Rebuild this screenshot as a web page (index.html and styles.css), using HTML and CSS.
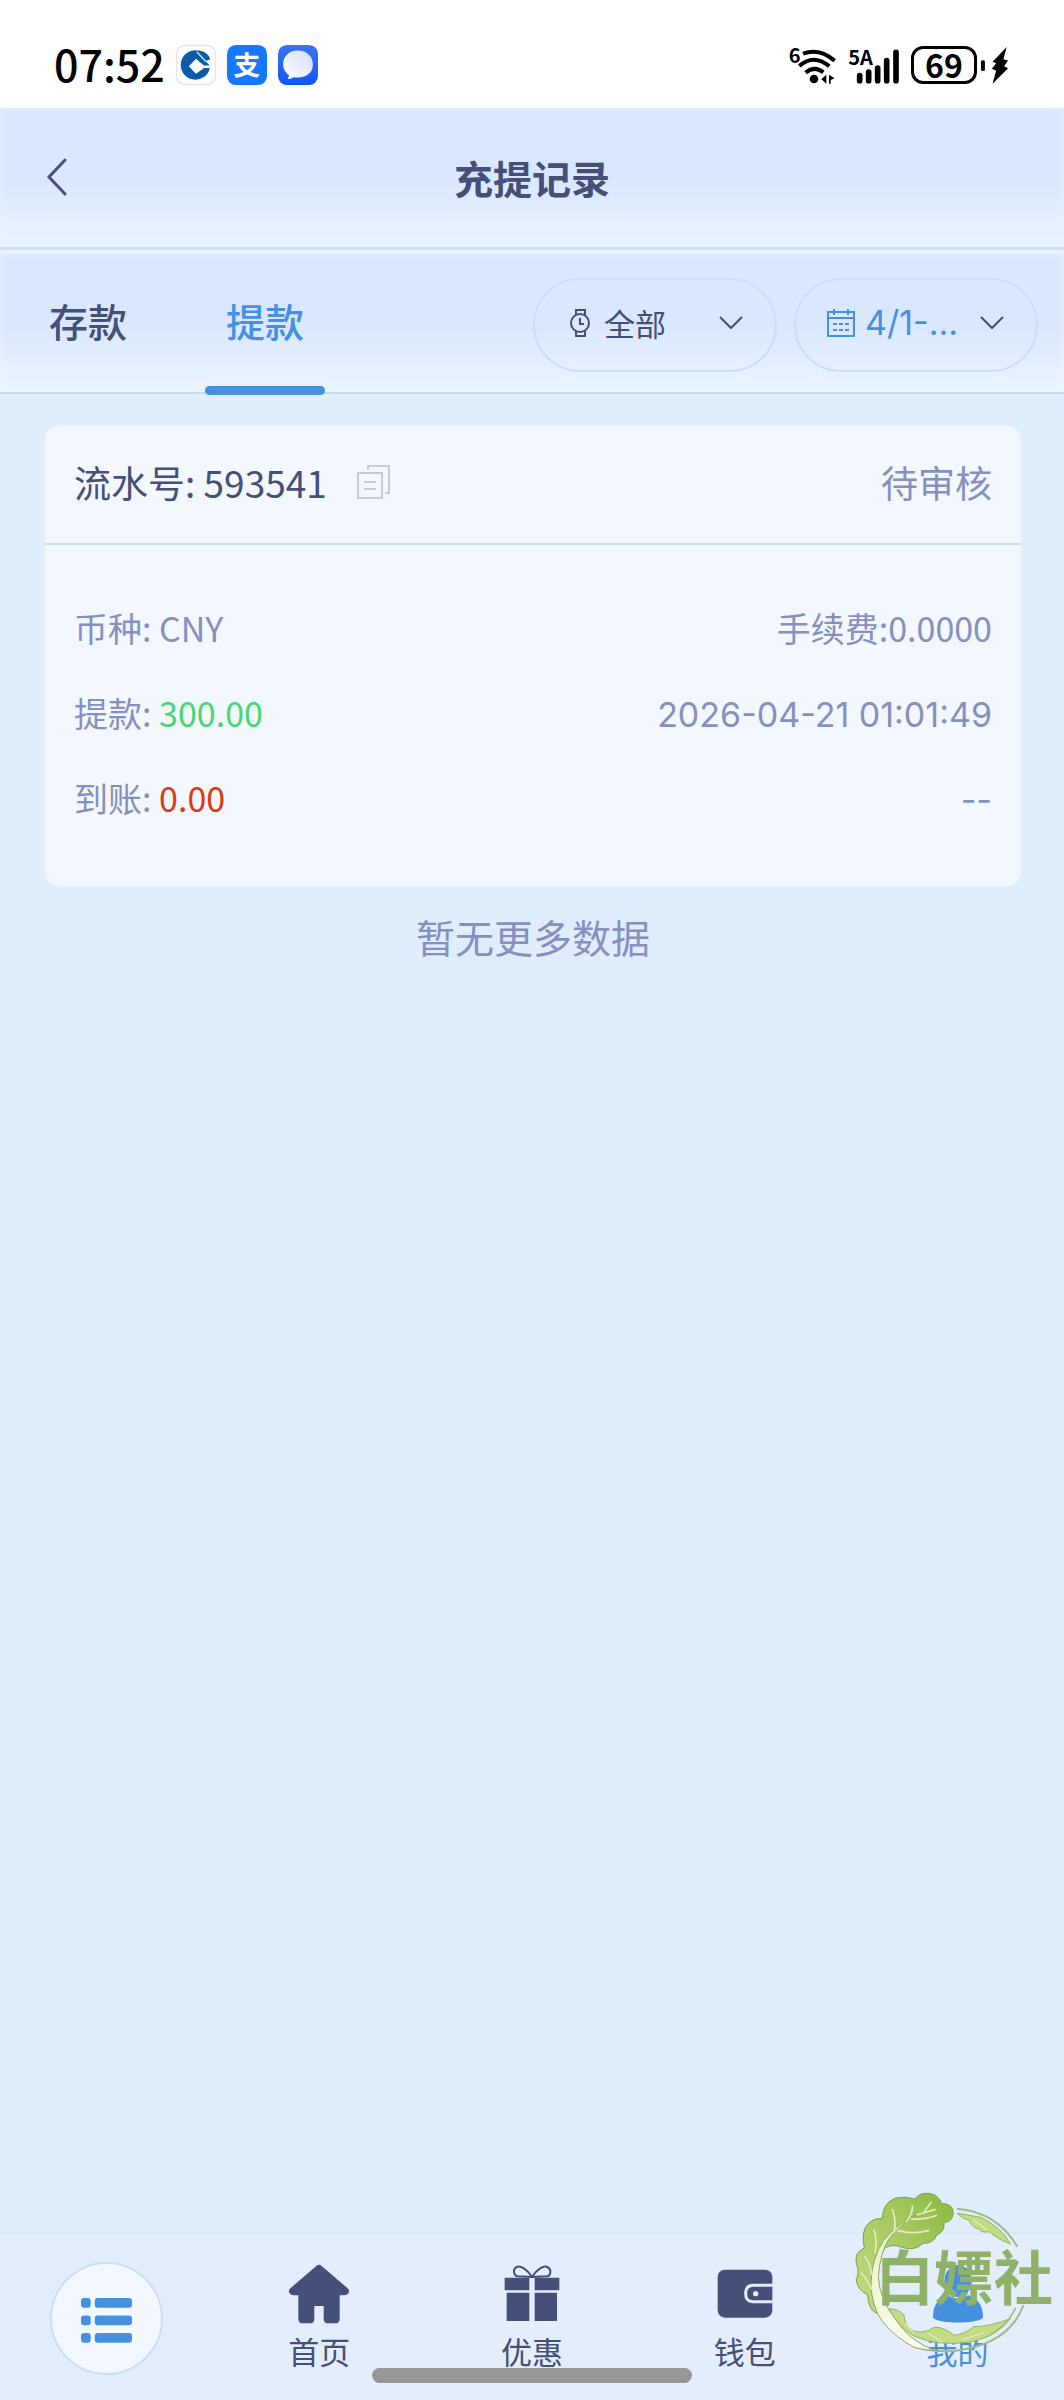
FILE: index.html
```html
<!DOCTYPE html>
<html lang="zh-CN">
<head>
    <meta charset="UTF-8">
    <meta name="viewport" content="width=device-width, initial-scale=1.0">
    <title>充提记录</title>
    <link rel="stylesheet" href="styles.css">
</head>
<body>

<div class="status-bar">
    <div class="status-left">
        <span class="clock">07:52</span>
        <svg class="app-icon" viewBox="0 0 117 117">
            <rect x="1.5" y="1.5" width="114" height="114" rx="24" fill="#fff" stroke="#e6e6e6" stroke-width="4"/>
            <path d="M68 17A43 43 0 1 0 99 67H82L60 83 38 62 58 41 82 60H99L63 24Z" fill="#0a5ca8"/>
            <path d="M66 16Q84 17 96 32L100 42 88 47 61 20Z" fill="#0a5ca8"/>
            <path d="M61 20L87 48" stroke="#b9dcf5" stroke-width="4"/>
            <path d="M60 41L79 62 58 84 38 62Z" fill="#fff"/>
        </svg>
        <svg class="app-icon" viewBox="0 0 117 117">
            <rect width="117" height="117" rx="26" fill="#1677ff"/>
            <text class="pay-mark" x="58" y="88" text-anchor="middle">支</text>
        </svg>
        <svg class="app-icon" viewBox="0 0 117 117">
            <defs>
                <linearGradient id="chat-bg" x1="0" y1="0" x2="0" y2="1">
                    <stop offset="0" stop-color="#3d74f3"/>
                    <stop offset="1" stop-color="#1155f6"/>
                </linearGradient>
                <linearGradient id="chat-bubble" x1="1" y1="0" x2="0" y2="1">
                    <stop offset="0" stop-color="#d3defa"/>
                    <stop offset="1" stop-color="#fff"/>
                </linearGradient>
            </defs>
            <rect width="117" height="117" rx="26" fill="url(#chat-bg)"/>
            <path d="M58 16C84 16 102 33 102 57S84 95 58 95C54 95 50 95 46 94Q37 100 28 99 33 94 32 88C22 81 15 70 15 57 15 33 32 16 58 16Z" fill="url(#chat-bubble)"/>
        </svg>
    </div>
    <div class="status-right">
        <svg class="wifi" viewBox="750 130 150 126">
            <text class="net-label" x="755" y="187">6</text>
            <g fill="none" stroke="#000" stroke-width="12">
                <path d="M798 159Q846 141 893 180"/>
                <path d="M787 196Q830 158 877 197"/>
                <path d="M806 216Q832 194 859 215"/>
            </g>
            <circle cx="831" cy="235" r="13"/>
            <path d="M853 236L868 222V249ZM893 233L876 222V249H881V238Z"/>
        </svg>
        <svg class="signal" viewBox="925 130 156 126">
            <text class="net-label" x="926" y="194">5A</text>
            <g stroke="#000" stroke-width="17" stroke-linecap="round">
                <path d="M960 225V240M987 214V240M1014 202V240M1041 180V240M1069 155V240"/>
            </g>
        </svg>
        <span class="battery">69</span>
        <svg class="bolt" viewBox="1318 138 86 118">
            <rect x="1320" y="181" width="12" height="33" rx="5"/>
            <path d="M1398 141L1355 186 1366 190 1353 207 1366 213 1355 252 1402 205 1390 199 1402 182 1388 178Z"/>
        </svg>
    </div>
</div>

<header class="header">
    <button class="back" aria-label="返回">
        <svg viewBox="0 0 22 38"><path d="M19 2L3 19 19 36" fill="none" stroke="#454f78" stroke-width="3" stroke-linecap="round"/></svg>
    </button>
    <h1>充提记录</h1>
</header>

<div class="toolbar">
    <div class="tabs" role="tablist">
        <button class="tab" role="tab" aria-selected="false">存款</button>
        <button class="tab active" role="tab" aria-selected="true">提款</button>
    </div>
    <div class="filters">
        <div class="filter">
            <svg class="filter-icon" viewBox="0 0 28 28" fill="none" stroke="#454f78" stroke-width="2">
                <circle cx="14" cy="14" r="9"/>
                <path d="M10 6V1H19V6M10 22V27H19V22M14 9V15H18"/>
            </svg>
            <select class="filter-value" aria-label="类型">
                <option>全部</option>
            </select>
            <svg class="chevron" viewBox="0 0 24 14"><path d="M1 1L12 12 23 1" fill="none" stroke="#454f78" stroke-width="2"/></svg>
        </div>
        <button class="filter date">
            <svg class="filter-icon" viewBox="0 0 28 28" fill="none" stroke="#4690e0" stroke-width="2">
                <path d="M1 3H27V27H1ZM1 9H27M7 0V6M21 0V6"/>
                <path d="M6 15H22M6 21H22" stroke-dasharray="4 2"/>
            </svg>
            <span class="filter-value">4/1-...</span>
            <svg class="chevron" viewBox="0 0 24 14"><path d="M1 1L12 12 23 1" fill="none" stroke="#454f78" stroke-width="2"/></svg>
        </button>
    </div>
</div>

<main class="content">
    <div class="card">
        <div class="card-head">
            <span>流水号: 593541</span>
            <button class="copy" aria-label="复制">
                <svg viewBox="0 0 34 34" fill="none" stroke="#c5cae2" stroke-width="2">
                    <path d="M11 5V1H32V28H28M1 8H25V33H1ZM7 17H19M7 24H19"/>
                </svg>
            </button>
            <span class="state">待审核</span>
        </div>
        <div class="card-body">
            <div class="row"><span>币种: CNY</span><span>手续费:0.0000</span></div>
            <div class="row"><span>提款: <b class="green">300.00</b></span><span class="time">2026-04-21 01:01:49</span></div>
            <div class="row"><span>到账: <b class="red">0.00</b></span><span class="time">--</span></div>
        </div>
    </div>
    <p class="no-more">暂无更多数据</p>
</main>

<nav class="bottom-nav">
    <button class="menu" aria-label="菜单">
        <svg viewBox="0 0 152 134" fill="#4690e0">
            <rect width="29" height="29" rx="9"/><rect x="41" width="111" height="29" rx="9"/>
            <rect y="52" width="29" height="29" rx="9"/><rect x="41" y="52" width="111" height="29" rx="9"/>
            <rect y="104" width="29" height="29" rx="9"/><rect x="41" y="104" width="111" height="29" rx="9"/>
        </svg>
    </button>
    <a class="nav-item" href="#">
        <svg viewBox="0 0 180 180" fill="#454f78">
            <path d="M82 6Q90-1 98 6L175 72Q184 80 178 88 175 94 165 94H152V164Q152 178 138 178H118Q104 178 104 164V126H76V164Q76 178 62 178H42Q28 178 28 164V94H15Q5 94 2 88-4 80 5 72Z"/>
        </svg>
        首页
    </a>
    <a class="nav-item" href="#">
        <svg viewBox="0 0 180 180" fill="#454f78">
            <path d="M8 41H82V79H8ZM98 41H172V79H98ZM14 86H82V171H14ZM98 86H165V171H98Z"/>
            <path d="M90 39C76 16 55 2 42 10 31 18 36 36 48 37ZM90 39C104 16 125 2 138 10 150 18 146 36 134 37Z" fill="none" stroke="#454f78" stroke-width="6"/>
        </svg>
        优惠
    </a>
    <a class="nav-item" href="#">
        <svg viewBox="0 0 180 180">
            <rect x="8" y="17" width="164" height="144" rx="22" fill="#454f78"/>
            <path d="M173 64H115Q92 64 92 89T115 113H173" fill="none" stroke="#e3edfc" stroke-width="9"/>
            <circle cx="122" cy="89" r="8" fill="#e3edfc"/>
        </svg>
        钱包
    </a>
    <a class="nav-item current" href="#">
        <svg viewBox="0 0 180 180" fill="#4690e0">
            <ellipse cx="90" cy="51" rx="41" ry="48"/>
            <path d="M58 94Q90 115 122 94C151 104 165 127 165 158 165 181 15 181 15 158 15 127 29 104 58 94Z"/>
        </svg>
        我的
    </a>
    <div class="home-bar"></div>

    <!-- cabbage badge in the corner -->
    <svg class="badge" viewBox="0 0 690 660">
        <defs>
            <linearGradient id="leaf" x1="0" y1="1" x2="1" y2="0">
                <stop offset="0" stop-color="#c6dc86"/>
                <stop offset="1" stop-color="#8cba42"/>
            </linearGradient>
            <linearGradient id="stem" x1="0" y1="0" x2="0" y2="1">
                <stop offset="0" stop-color="#e6f0bd"/>
                <stop offset="1" stop-color="#fafcee"/>
            </linearGradient>
        </defs>
        <path d="M369 86Q490 96 550 200M568 376Q530 480 400 506 320 524 240 500" fill="none" stroke="#9fbc82" stroke-width="6"/>
        <path d="M530 193Q500 140 440 112L370 100Q385 118 405 121 415 145 435 147 445 160 465 155 490 177 530 193Z" fill="#c5dc86" stroke="#94b45f" stroke-width="3"/>
        <path d="M165 387Q190 385 210 405 211 435 235 452 270 464 300 442 330 440 360 466 390 463 420 440 470 440 530 415 490 468 410 486 310 500 240 468 190 438 165 387Z" fill="#c5dc86" stroke="#94b45f" stroke-width="3"/>
        <path d="M545 383Q515 445 455 472" fill="none" stroke="#9fbc82" stroke-width="5"/>
        <path d="M132 402Q102 390 101 344 68 328 67 298 78 278 67 250 60 218 91 204 81 155 100 134 118 113 145 116 145 72 182 55 215 47 242 57 263 31 300 44 322 58 322 71 357 69 358 100 356 125 330 128 333 155 308 165 300 190 267 190 240 216 202 201 170 190 151 206 122 260 118 330Z" fill="url(#leaf)" stroke="#7c9d45" stroke-width="3"/>
        <path d="M273 94Q198 121 149 181 113 235 111 309 112 378 144 423 188 476 239 501 258 509 300 511 223 479 187 421 137 359 133 292 137 222 164 178 201 126 273 94Z" fill="url(#stem)" stroke="#91a765" stroke-width="3"/>
        <path d="M180 158Q188 126 175 87M217 126Q238 98 235 75M190 151Q235 165 286 151M230 117Q272 120 309 106M247 105L305 88M123 220Q130 178 120 148M112 284Q110 246 91 229M115 330Q95 290 80 278M270 96L292 66" fill="none" stroke="#e3eebc" stroke-width="5"/>
        <path d="M214 430L240 460M280 459L326 487M390 477L450 458M418 120L460 150" fill="none" stroke="#edf4cf" stroke-width="3"/>
        <text class="badge-text" x="390" y="360" text-anchor="middle">白嫖社</text>
    </svg>
</nav>

</body>
</html>
```

FILE: styles.css
```css
* {
    box-sizing: border-box;
}
body {
    margin: 0;
    min-height: 100vh;
    display: flex;
    flex-direction: column;
    background-color: #e0edfd;
    color: #454f78;
    font-family: "Noto Sans CJK SC", sans-serif;
}
button,
select {
    margin: 0;
    padding: 0;
    border: none;
    background: none;
    color: inherit;
    font: inherit;
    cursor: pointer;
}
svg {
    display: block;
    flex: none;
    overflow: visible;
}

/* status bar */
.status-bar {
    display: flex;
    justify-content: space-between;
    height: 108px;
    padding: 22px 55px 0 54px;
    background: #fff;
    color: #000;
}
.status-left,
.status-right {
    display: flex;
    align-items: center;
    gap: 11px;
}
.clock {
    padding-bottom: 4px;
    font-size: 43px;
    font-weight: 500;
    line-height: 48px;
}
.app-icon {
    width: 40px;
    height: 40px;
}
.pay-mark {
    fill: #fff;
    font-size: 78px;
    font-weight: 700;
}
.wifi {
    width: 50px;
    height: 42px;
}
.signal {
    width: 52px;
    height: 42px;
}
.net-label {
    font-family: "Noto Sans CJK SC", sans-serif;
    font-size: 60px;
    font-weight: 700;
}
.battery {
    width: 66px;
    height: 38px;
    border: 3px solid #000;
    border-radius: 12px;
    font-size: 32px;
    font-weight: 700;
    line-height: 30px;
    text-align: center;
}
.bolt {
    width: 29px;
    height: 39px;
    margin-left: -8px;
}

/* header */
.header {
    position: relative;
    display: flex;
    align-items: center;
    justify-content: center;
    height: 142px;
    padding-bottom: 2px;
    border-bottom: 3px solid #cddff1;
    background: linear-gradient(#d9e7ff 50%, #ecf4fe);
    box-shadow: inset 0 0 6px #e6f4fd;
}
.header h1 {
    margin: 0;
    font-size: 39px;
    font-weight: 700;
    line-height: 56px;
}
.back {
    position: absolute;
    left: 46px;
}
.back svg {
    width: 22px;
    height: 38px;
}

/* tabs and filters */
.toolbar {
    display: flex;
    justify-content: space-between;
    height: 144px;
    padding-right: 26px;
    border-top: 3px solid #e9f4fe;
    border-bottom: 2px solid #c5daf1;
    background: linear-gradient(#d9e7ff 50%, #ecf4fe);
    box-shadow: inset 0 0 6px #eef6fe;
}
.tabs {
    display: flex;
    padding-left: 28px;
    gap: 57px;
}
.tab {
    position: relative;
    width: 120px;
    padding-bottom: 6px;
    font-size: 39px;
    font-weight: 500;
}
.tab.active {
    color: #4690e0;
}
.tab.active::after {
    content: "";
    position: absolute;
    left: 0;
    right: 0;
    bottom: -3px;
    height: 9px;
    border-radius: 5px;
    background: #4690e0;
}
.filters {
    display: flex;
    align-items: center;
    gap: 17px;
    padding-top: 5px;
}
.filter {
    display: flex;
    align-items: center;
    width: 244px;
    height: 94px;
    padding: 0 32px 4px 31px;
    border: 2px solid #c9def8;
    border-radius: 48px;
    font-size: 31px;
}
.filter-icon {
    width: 28px;
    height: 28px;
    margin-right: 10px;
}
.filter-value {
    flex: 1;
    min-width: 0;
    appearance: none;
    text-align: left;
    line-height: 44px;
}
.date .filter-value {
    color: #4690e0;
    font-family: Inter, "Noto Sans CJK SC", sans-serif;
    font-size: 34px;
}
.chevron {
    width: 24px;
    height: 14px;
}

/* record card */
.content {
    flex: 1;
    padding: 32px 43px 0 45px;
}
.card {
    border-radius: 14px;
    background: #f3f8fe;
}
.card-head {
    display: flex;
    align-items: center;
    height: 119px;
    padding: 0 29px 6px;
    border-bottom: 2px solid #c9dcee;
    font-size: 37px;
}
.copy {
    margin-left: 30px;
}
.copy svg {
    width: 34px;
    height: 34px;
}
.state {
    margin-left: auto;
    color: #8690c0;
}
.card-body {
    padding: 40px 29px 46px;
}
.row {
    display: flex;
    align-items: baseline;
    justify-content: space-between;
    height: 85px;
    color: #8690c0;
    font-size: 34px;
    line-height: 85px;
}
.row b {
    font-weight: 400;
}
.row .green {
    color: #48d676;
}
.row .red {
    color: #d83c14;
}
.row .time {
    font-family: Inter, "Noto Sans CJK SC", sans-serif;
}
.no-more {
    margin: 22px 0;
    color: #8690c0;
    font-size: 39px;
    line-height: 56px;
    text-align: center;
}

/* bottom nav */
.bottom-nav {
    position: relative;
    display: grid;
    grid-template-columns: repeat(5, 1fr);
    height: 168px;
    border-top: 2px solid #dce7f1;
    background: #e3edfc;
}
.menu {
    display: flex;
    align-items: center;
    justify-content: center;
    justify-self: center;
    width: 113px;
    height: 113px;
    margin-top: 28px;
    padding-top: 4px;
    border: 2px solid #cadef5;
    border-radius: 50%;
    background: #f3f8fe;
}
.menu svg {
    width: 51px;
    height: 45px;
}
.nav-item {
    display: flex;
    flex-direction: column;
    align-items: center;
    gap: 5px;
    padding-top: 30px;
    color: #454f78;
    font-size: 31px;
    line-height: 44px;
    text-decoration: none;
}
.nav-item svg {
    width: 60px;
    height: 60px;
}
.nav-item.current {
    color: #4690e0;
}
.home-bar {
    position: absolute;
    left: 35%;
    right: 35%;
    bottom: 17px;
    height: 15px;
    border-radius: 8px;
    background: #979797;
}
.badge {
    position: absolute;
    right: 0;
    bottom: 0;
    width: 230px;
    height: 220px;
    pointer-events: none;
}
.badge-text {
    fill: #8fb268;
    font-family: "Noto Sans CJK SC", sans-serif;
    font-size: 178px;
    font-weight: 700;
}
```
